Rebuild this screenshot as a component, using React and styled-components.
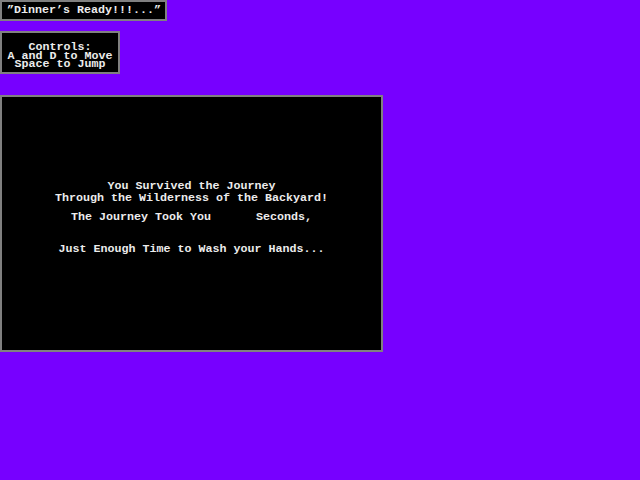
import React from 'react'
import styled, { createGlobalStyle } from 'styled-components'

const GlobalStyle = createGlobalStyle`
  html, body {
    margin: 0;
    padding: 0;
    background: #7700ff;
    height: 100%;
  }
  body {
    font-family: "Liberation Mono", "DejaVu Sans Mono", monospace;
    font-weight: bold;
    font-size: 11.67px;
    color: #ececec;
  }
`

const Page = styled.div`
  display: flex;
  flex-direction: column;
  align-items: flex-start;
`

const Panel = styled.div`
  box-sizing: border-box;
  background: #000;
  border: 2px solid #808080;
  white-space: pre;
`

const TitleBox = styled(Panel)`
  width: 167px;
  height: 21px;
  padding-left: 5px;
  line-height: 17px;
`

const ControlsBox = styled(Panel)`
  width: 120px;
  height: 43px;
  margin-top: 10px;
  padding-top: 10px;
  line-height: 8.5px;
  text-align: center;
`

const Screen = styled(Panel)`
  width: 383px;
  height: 257px;
  margin-top: 21px;
  padding-top: 83px;
  display: flex;
  flex-direction: column;
  align-items: center;
`

const Line = styled.div`
  line-height: 12px;
  margin-top: ${p => p.$gap || 0}px;
  text-align: center;
`

const TimeSlot = styled.span`
  display: inline-block;
  width: 45px;
`

const App = () => {
  return (
    <Page>
      <GlobalStyle />
      <TitleBox>”Dinner’s Ready!!!...”</TitleBox>
      <ControlsBox>
        <div>Controls:</div>
        <div>A and D to Move</div>
        <div>Space to Jump</div>
      </ControlsBox>
      <Screen>
        <Line>You Survived the Journey</Line>
        <Line>Through the Wilderness of the Backyard!</Line>
        <Line $gap={7}>
          The Journey Took You<TimeSlot />Seconds,
        </Line>
        <Line $gap={20}>Just Enough Time to Wash your Hands...</Line>
      </Screen>
    </Page>
  )
}

export default App
